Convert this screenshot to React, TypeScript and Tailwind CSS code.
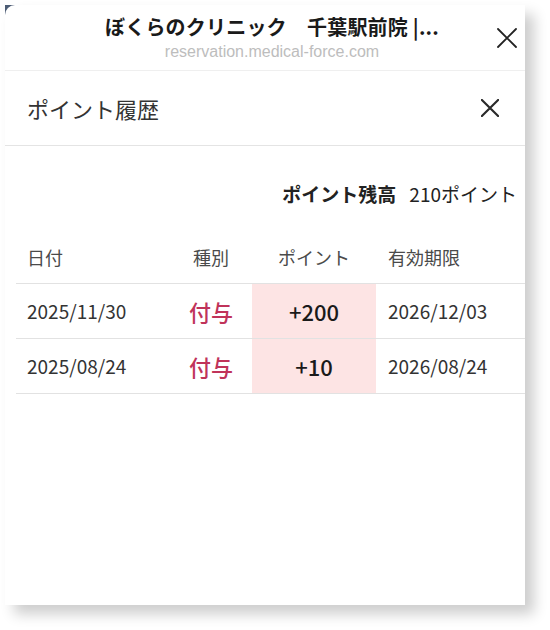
import React from 'react';

type Row = { date: string; kind: string; points: string; expires: string };

const ROWS: Row[] = [
  { date: '2025/11/30', kind: '付与', points: '+200', expires: '2026/12/03' },
  { date: '2025/08/24', kind: '付与', points: '+10', expires: '2026/08/24' },
];

const jp = { fontFamily: '"Noto Sans CJK JP", "Noto Sans", sans-serif' };

function CloseIcon({ size, stroke, color }: { size: number; stroke: number; color: string }) {
  return (
    <svg width={size} height={size} viewBox="0 0 20 20" fill="none">
      <path d="M1 1 L19 19 M19 1 L1 19" stroke={color} strokeWidth={stroke} strokeLinecap="round" />
    </svg>
  );
}

export default function App() {
  return (
    <div className="relative w-[550px] h-[630px] bg-white overflow-hidden" style={jp}>
      {/* dark corner peeking from behind the sheet */}
      <div className="absolute left-[5px] top-[5px] w-[12px] h-[12px] bg-[#4d5d75]" />

      <div className="relative ml-[5px] mt-[5px] w-[520px] h-[600px] bg-white rounded-tl-[10px] shadow-[9px_9px_14px_rgba(0,0,0,0.2)] flex flex-col">
        {/* browser bar */}
        <header className="relative h-[66px] border-b border-[#efefef] flex flex-col items-center pl-[14px]">
          <div className="mt-[9px] text-[20px] leading-[26px] font-bold text-[#1a1a1a] tracking-[0.2px]">
            ぼくらのクリニック　千葉駅前院 |...
          </div>
          <div
            className="mt-[2px] text-[16px] leading-[20px] text-[#bdbdbd]"
            style={{ fontFamily: '"Liberation Sans", Arial, sans-serif' }}
          >
            reservation.medical-force.com
          </div>
          <div className="absolute right-[8px] top-[23px]">
            <CloseIcon size={20} stroke={1.8} color="#222" />
          </div>
        </header>

        {/* modal header */}
        <div className="h-[75px] border-b border-[#e4e4e4] flex items-center justify-between pl-[22px] pr-[26px]">
          <h1 className="text-[22px] font-normal text-[#333]">ポイント履歴</h1>
          <CloseIcon size={18} stroke={2.4} color="#2a2a2a" />
        </div>

        {/* balance */}
        <div className="mt-[35px] flex items-center justify-end gap-[13px] pr-[8px] text-[19px] leading-[26px] text-[#222]">
          <span className="font-bold">ポイント残高</span>
          <span>210ポイント</span>
        </div>

        {/* history table */}
        <div className="ml-[11px] mt-[25px]">
          <div className="h-[52px] flex items-center text-[18px] text-[#4a4a4a] border-b-[1.5px] border-[#e2e2e2]">
            <div className="w-[154px] pl-[11px]">日付</div>
            <div className="w-[82px] text-center">種別</div>
            <div className="w-[124px] text-center">ポイント</div>
            <div className="flex-1 pl-[12px]">有効期限</div>
          </div>
          {ROWS.map((r) => (
            <div key={r.date} className="h-[55px] flex items-stretch border-b-[1.5px] border-[#e2e2e2]">
              <div className="w-[154px] pl-[11px] flex items-center text-[19px] text-[#333]">{r.date}</div>
              <div className="w-[82px] flex items-center justify-center text-[22px] font-medium text-[#c0335a]">
                {r.kind}
              </div>
              <div className="w-[124px] flex items-center justify-center bg-[#fde4e4] text-[22px] font-medium text-[#1a1a1a]">
                {r.points}
              </div>
              <div className="flex-1 pl-[12px] flex items-center text-[19px] text-[#333]">{r.expires}</div>
            </div>
          ))}
        </div>
      </div>
    </div>
  );
}
